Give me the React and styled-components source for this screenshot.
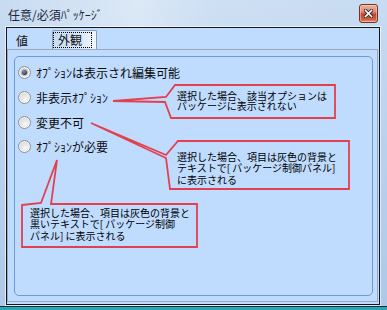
import React from "react";
import styled, { createGlobalStyle } from "styled-components";

const FONT = `"Noto Sans CJK JP", "Noto Sans", sans-serif`;

const GlobalStyle = createGlobalStyle`
  html, body { margin: 0; padding: 0; width: 387px; height: 310px; overflow: hidden; background: #2aa6b9; }
  #root { width: 387px; height: 310px; }
  * { box-sizing: border-box; }
`;

const Window = styled.div`
  position: relative;
  width: 387px;
  height: 310px;
  display: flex;
  flex-direction: column;
  padding: 0 7px 5px 6px;
  font-family: ${FONT};
  background:
    linear-gradient(90deg, rgba(255,255,255,0) 0%, rgba(255,255,255,0.35) 35%, rgba(255,255,255,0.1) 55%, rgba(255,255,255,0) 100%),
    linear-gradient(180deg, #c8dcf2 0%, #bcd3ee 40%, #aec8e7 100%);
  box-shadow: inset 0 -3px 0 #2aa6b9, inset 0 -4px 0 #1c2a36;
`;

const TitleBar = styled.div`
  height: 27px;
  flex: none;
  display: flex;
  align-items: center;
  padding: 1px 2px 0 2px;
`;

const Title = styled.span`
  font-size: 12px;
  color: #1c2738;
  white-space: nowrap;
`;

const CloseButton = styled.div`
  margin-left: auto;
  margin-top: -2px;
  width: 19px;
  height: 19px;
  border: 1px solid #6e3528;
  border-radius: 3px;
  display: flex;
  align-items: center;
  justify-content: center;
  background: linear-gradient(180deg, #eab4a2 0%, #dc8a6e 40%, #c5432a 55%, #d2603f 85%, #e49a7a 100%);
  box-shadow: inset 0 0 0 1px rgba(255, 220, 200, 0.5);
`;

const Client = styled.div`
  flex: 1;
  display: flex;
  flex-direction: column;
  border: 1px solid #101820;
  background: #bfdbfe;
  box-shadow: 0 0 0 1px rgba(255, 255, 255, 0.6);
`;

const TabStrip = styled.div`
  height: 21px;
  flex: none;
  display: flex;
  align-items: flex-end;
  padding-left: 2px;
`;

const Tab = styled.div`
  font-size: 12px;
  color: #111;
  white-space: nowrap;
  display: flex;
  align-items: ${(p) => (p.$active ? "flex-start" : "center")};
  height: ${(p) => (p.$active ? "19px" : "17px")};
  width: ${(p) => (p.$active ? "45px" : "43px")};
  padding-left: ${(p) => (p.$active ? "0" : "7px")};
  border: ${(p) => (p.$active ? "1px solid #8d9aab" : "none")};
  border-bottom: none;
  border-radius: 2px 2px 0 0;
  background: ${(p) =>
    p.$active ? "linear-gradient(90deg, #c6dcf7 0%, #d6e6f8 60%, #f3f7fc 100%)" : "transparent"};
`;

const FocusRect = styled.span`
  margin: 1px 0 0 0;
  height: 16px;
  display: flex;
  align-items: center;
  border: 1px dotted #000;
  padding: 0 9px 0 4px;
  line-height: 14px;
`;

const TabPane = styled.div`
  flex: 1;
  display: flex;
  flex-direction: column;
  border: 1px solid #9aa8ba;
  margin: 0 1px 2px 0;
`;

const GroupBox = styled.div`
  flex: 1;
  margin: 6px 4px 5px 6px;
  border: 1px solid #6f9ad6;
  border-radius: 5px;
  padding: 3.5px 0 0 3px;
  display: flex;
  flex-direction: column;
`;

const RadioRow = styled.label`
  height: 24.67px;
  display: flex;
  align-items: center;
  gap: 5px;
  font-size: 12px;
  color: #0a0a0a;
  white-space: nowrap;
`;

const Radio = styled.span`
  position: relative;
  width: 13px;
  height: 13px;
  flex: none;
  border-radius: 50%;
  border: 1px solid #8d9196;
  background: radial-gradient(circle at 60% 65%, #f8f8f8 0%, #e4e4e4 45%, #c9cbce 100%);
  box-shadow: inset 0 0 0 1px rgba(255, 255, 255, 0.7);
  &::after {
    content: "";
    display: ${(p) => (p.$checked ? "block" : "none")};
    position: absolute;
    left: 3px;
    top: 3px;
    width: 5px;
    height: 5px;
    border-radius: 50%;
    background: radial-gradient(circle at 40% 35%, #7f96b8 0%, #2c4466 60%, #18273c 100%);
    box-shadow: 0 0 0 1px rgba(150, 120, 90, 0.45);
  }
`;

const Overlay = styled.svg`
  position: absolute;
  left: 0;
  top: 0;
  pointer-events: none;
`;

const CalloutText = styled.div`
  position: absolute;
  left: ${(p) => p.$x}px;
  top: ${(p) => p.$y}px;
  display: flex;
  flex-direction: column;
  pointer-events: none;
`;

const CalloutLine = styled.div`
  height: ${(p) => p.$lh}px;
  font-size: 10px;
  line-height: ${(p) => p.$lh}px;
  color: #000;
  white-space: nowrap;
`;

const callouts = [
  "175,85 335,85 335,118 171,118 165,102 113,101 166,97",
  "178,141 349,141 349,189 170,189 166,158 91,123 166,155",
  "22,205 41,203 57,160 51,204 197,204 197,247 22,247",
];

const notes = [
  { x: 177, y: 90.5, lh: 10.7, lines: ["選択した場合、該当オプションは", "パッケージに表示されない"] },
  {
    x: 177,
    y: 150.5,
    lh: 11.5,
    lines: ["選択した場合、項目は灰色の背景と", "テキストで[ パッケージ制御パネル]", "に表示される"],
  },
  {
    x: 30,
    y: 206.7,
    lh: 11.7,
    lines: ["選択した場合、項目は灰色の背景と", "黒いテキストで[ パッケージ制御", "パネル] に表示される"],
  },
];

const options = [
  { label: "ｵﾌﾟｼｮﾝは表示され編集可能", checked: true },
  { label: "非表示ｵﾌﾟｼｮﾝ" },
  { label: "変更不可" },
  { label: "ｵﾌﾟｼｮﾝが必要" },
];

export default function App() {
  return (
    <>
      <GlobalStyle />
      <Window>
        <TitleBar>
          <Title>任意/必須ﾊﾟｯｹｰｼﾞ</Title>
          <CloseButton>
            <svg width="9" height="9" viewBox="0 0 9 9">
              <path d="M1.5 1.5 L7.5 7.5 M7.5 1.5 L1.5 7.5" stroke="#3b2a2a" strokeWidth="3.4" strokeLinecap="square" />
              <path d="M1.5 1.5 L7.5 7.5 M7.5 1.5 L1.5 7.5" stroke="#ffffff" strokeWidth="1.6" strokeLinecap="square" />
            </svg>
          </CloseButton>
        </TitleBar>
        <Client>
          <TabStrip>
            <Tab>値</Tab>
            <Tab $active>
              <FocusRect>外観</FocusRect>
            </Tab>
          </TabStrip>
          <TabPane>
            <GroupBox>
              {options.map((o) => (
                <RadioRow key={o.label}>
                  <Radio $checked={o.checked} />
                  {o.label}
                </RadioRow>
              ))}
            </GroupBox>
          </TabPane>
        </Client>
        <Overlay width="387" height="310" viewBox="0 0 387 310">
          {callouts.map((pts) => (
            <polygon key={pts} points={pts} fill="none" stroke="#e3404f" strokeWidth="1.8" strokeLinejoin="miter" />
          ))}
        </Overlay>
        {notes.map((n) => (
          <CalloutText key={n.lines[0] + n.x} $x={n.x} $y={n.y}>
            {n.lines.map((l) => (
              <CalloutLine key={l} $lh={n.lh}>
                {l}
              </CalloutLine>
            ))}
          </CalloutText>
        ))}
      </Window>
    </>
  );
}
